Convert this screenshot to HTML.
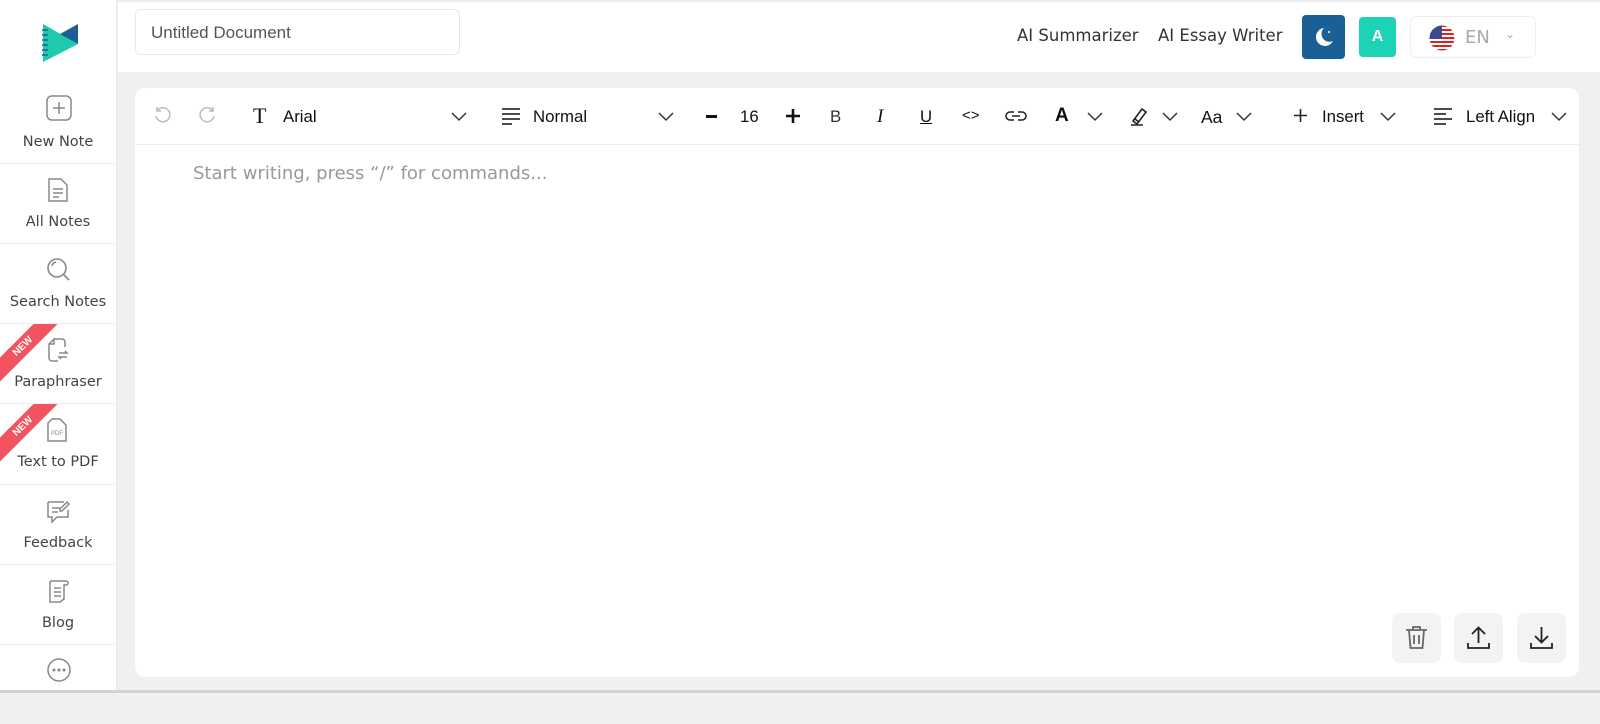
<!DOCTYPE html>
<html><head><meta charset="utf-8"><style>
*{box-sizing:border-box;margin:0;padding:0}
body{width:1600px;height:693px;overflow:hidden;background:#f0f0f0;font-family:"Liberation Sans",Arial,sans-serif;position:relative}
.side{position:absolute;left:0;top:0;width:117px;height:690px;background:#fff;border-right:1px solid #e8e8e8}
.item{position:absolute;left:0;width:116px;height:80px;border-top:1px solid #eee;text-align:center;color:#444;font-family:"DejaVu Sans",sans-serif;font-size:14.5px;overflow:hidden}
.item svg{position:absolute;left:46px;top:13px}
.item span{position:absolute;left:0;right:0;top:50px}
.rib{position:absolute;left:-22px;top:14px;width:90px;height:17px;background:#f2535f;color:#fff;font-size:10px;font-weight:bold;transform:rotate(-45deg);line-height:17px;text-align:center;font-family:"Liberation Sans",sans-serif}
.top{position:absolute;left:118px;top:0;width:1482px;height:72px;background:#fff;border-top:2px solid #eee}
.title{position:absolute;left:135px;top:9px;width:325px;height:46px;border:1px solid #e8e8e8;border-radius:6px;font-size:17px;color:#555;padding:13px 15px}
.tl{position:absolute;top:26px;color:#333;font-family:"DejaVu Sans",sans-serif;font-size:16.5px}
.card{position:absolute;left:135px;top:88px;width:1444px;height:589px;background:#fff;border-radius:10px}
.tb{position:absolute;left:0;top:0;width:100%;height:57px;border-bottom:1px solid #eee}
.t{position:absolute;top:19px;font-size:16.8px;color:#111}
.ch{position:absolute;top:24px}
.ph{position:absolute;left:58px;top:75px;font-family:"DejaVu Sans",sans-serif;font-size:18px;color:#999}
.bb{position:absolute;top:525px;width:49px;height:50px;background:#f2f3f4;border-radius:8px}
.bb svg{position:absolute;left:12px;top:12px}
</style></head><body>
<div class="side">
 <svg style="position:absolute;left:40px;top:22px" width="40" height="42" viewBox="0 0 40 42"><polygon points="3,2 38,22 3,40" fill="#1ec9ac"/><polygon points="38,2 38,22 20,12" fill="#1a5f96"/><g stroke="#1a5f96" stroke-width="1.5"><line x1="2" y1="8" x2="8" y2="8"/><line x1="2" y1="13" x2="8" y2="13"/><line x1="2" y1="18" x2="8" y2="18"/><line x1="2" y1="23" x2="8" y2="23"/><line x1="2" y1="28" x2="8" y2="28"/><line x1="2" y1="33" x2="8" y2="33"/></g></svg>
 <div class="item" style="top:82px;border-top:none"><svg width="26" height="26" viewBox="0 0 26 26" fill="none" stroke="#888" stroke-width="1.5"><rect x="1" y="1" width="24" height="24" rx="5"/><path d="M13 7v12M7 13h12"/></svg><span style="top:52px">New Note</span></div>
 <div class="item" style="top:163px"><svg width="24" height="26" viewBox="0 0 24 26" fill="none" stroke="#888" stroke-width="1.5"><path d="M3 2h12l6 6v16H3z"/><path d="M7 12h10M7 16h10M7 20h6"/></svg><span>All Notes</span></div>
 <div class="item" style="top:243px"><svg width="26" height="26" viewBox="0 0 26 26" fill="none" stroke="#888" stroke-width="1.6"><circle cx="11" cy="11" r="9"/><path d="M18 18l5 5M6 9a5 5 0 0 1 4-4"/></svg><span>Search Notes</span></div>
 <div class="item" style="top:323px"><div class="rib">NEW</div><svg width="24" height="26" viewBox="0 0 24 26" fill="none" stroke="#888" stroke-width="1.5"><path d="M8 2h8a3 3 0 0 1 3 3v5M12 24H6a3 3 0 0 1-3-3V7l5-5v5H3"/><path d="M13 16h8l-2-2M21 20h-8l2 2"/></svg><span>Paraphraser</span></div>
 <div class="item" style="top:403px"><div class="rib">NEW</div><svg width="22" height="26" viewBox="0 0 22 26" fill="none" stroke="#888" stroke-width="1.5"><path d="M6 2h8l6 6v16H2V6z"/><text x="5" y="18" font-size="6" fill="#888" stroke="none" font-family="Liberation Sans">PDF</text></svg><span>Text to PDF</span></div>
 <div class="item" style="top:484px"><svg width="26" height="26" viewBox="0 0 26 26" fill="none" stroke="#888" stroke-width="1.5"><path d="M2 4h16M2 4v15h4v5l5-5h11v-7"/><path d="M6 10h8M6 14h6M16 13l7-7-2-2-7 7v2z"/></svg><span>Feedback</span></div>
 <div class="item" style="top:564px"><svg width="24" height="26" viewBox="0 0 24 26" fill="none" stroke="#888" stroke-width="1.5"><path d="M5 3h15a2 2 0 0 1 0 4h-2v14l-4 3H4V6a3 3 0 0 1 1-3z"/><path d="M8 10h7M8 14h7M8 18h7"/></svg><span>Blog</span></div>
 <div class="item" style="top:644px"><svg width="26" height="26" viewBox="0 0 26 26" fill="none" stroke="#888" stroke-width="1.5" style="top:12px"><circle cx="13" cy="13" r="11"/><circle cx="8" cy="13" r=".8" fill="#888"/><circle cx="13" cy="13" r=".8" fill="#888"/><circle cx="18" cy="13" r=".8" fill="#888"/></svg></div>
</div>
<div class="top"></div>
<div style="position:absolute;left:0;top:690px;width:1600px;height:3px;background:#d0d4d8"></div>
<div class="title">Untitled Document</div>
<div class="tl" style="left:1017px">AI Summarizer</div>
<div class="tl" style="left:1158px">AI Essay Writer</div>
<div style="position:absolute;left:1302px;top:15px;width:43px;height:44px;background:#1a5f96;border-radius:4px"><svg width="43" height="44" viewBox="0 0 43 44"><path d="M22 13a9 9 0 1 0 9 13a8 8 0 0 1-9-13z" fill="#fff"/><circle cx="27" cy="17" r="1" fill="#fff"/></svg></div>
<div style="position:absolute;left:1359px;top:17px;width:37px;height:40px;background:#1dd3b5;border-radius:4px;color:#fff;font-weight:bold;font-size:16px;text-align:center;line-height:40px">A</div>
<div style="position:absolute;left:1410px;top:16px;width:126px;height:42px;border:1px solid #eee;border-radius:6px">
 <svg style="position:absolute;left:18px;top:8px" width="26" height="26" viewBox="0 0 26 26"><defs><clipPath id="c"><circle cx="13" cy="13" r="12.5"/></clipPath></defs><g clip-path="url(#c)"><rect width="26" height="26" fill="#fff"/><g fill="#d22"><rect y="0" width="26" height="2"/><rect y="4" width="26" height="2"/><rect y="8" width="26" height="2"/><rect y="12" width="26" height="2"/><rect y="16" width="26" height="2"/><rect y="20" width="26" height="2"/><rect y="24" width="26" height="2"/></g><rect width="13" height="14" fill="#3b4a8c"/></g></svg>
 <span style="position:absolute;left:54px;top:10px;font-size:18px;color:#aaa;font-family:'DejaVu Sans',sans-serif">EN</span>
 <span style="position:absolute;left:94px;top:10px;font-size:12px;color:#aaa">&#8964;</span>
</div>
<div class="card">
 <div class="tb">
  <svg style="position:absolute;left:17px;top:18px" width="20" height="20" viewBox="0 0 20 20" fill="none" stroke="#bbb" stroke-width="1.5"><path d="M5 5a7 7 0 1 1-1 5M5 1v4h4"/></svg>
  <svg style="position:absolute;left:63px;top:18px" width="20" height="20" viewBox="0 0 20 20" fill="none" stroke="#bbb" stroke-width="1.5"><path d="M15 5a7 7 0 1 0 1 5M15 1v4h-4"/></svg>
  <span class="t" style="left:118px;top:15px;font-family:'Liberation Serif',serif;font-size:22px">T</span>
  <span class="t" style="left:148px">Arial</span>
  <svg class="ch" style="left:316px" width="16" height="10" viewBox="0 0 16 10" fill="none" stroke="#333" stroke-width="1.5"><path d="M1 1l7 7 7-7"/></svg>
  <svg style="position:absolute;left:366px;top:19px" width="20" height="18" viewBox="0 0 20 18" stroke="#333" stroke-width="1.7"><path d="M1 2h18M1 7h18M1 12h18M1 17h10"/></svg>
  <span class="t" style="left:398px">Normal</span>
  <svg class="ch" style="left:523px" width="16" height="10" viewBox="0 0 16 10" fill="none" stroke="#333" stroke-width="1.5"><path d="M1 1l7 7 7-7"/></svg>
  <div style="position:absolute;left:571px;top:27px;width:11px;height:3px;background:#111"></div>
  <span class="t" style="left:605px">16</span>
  <svg style="position:absolute;left:650px;top:20px" width="16" height="16" viewBox="0 0 16 16" stroke="#111" stroke-width="2.6"><path d="M8 1v14M1 8h14"/></svg>
  <span class="t" style="left:695px;color:#333">B</span>
  <span class="t" style="left:742px;font-style:italic;font-family:'Liberation Serif',serif;font-size:19px;top:18px">I</span>
  <span class="t" style="left:785px;text-decoration:underline">U</span>
  <span class="t" style="left:827px;font-size:15px">&lt;&gt;</span>
  <svg style="position:absolute;left:870px;top:21px" width="22" height="14" viewBox="0 0 22 14" fill="none" stroke="#222" stroke-width="1.6"><path d="M9 3H5a4 4 0 0 0 0 8h4M13 3h4a4 4 0 0 1 0 8h-4M7 7h8"/></svg>
  <span class="t" style="left:920px;font-size:19px;top:17px;font-weight:bold">A</span>
  <svg class="ch" style="left:952px" width="16" height="10" viewBox="0 0 16 10" fill="none" stroke="#333" stroke-width="1.5"><path d="M1 1l7 7 7-7"/></svg>
  <svg style="position:absolute;left:994px;top:17px" width="22" height="22" viewBox="0 0 22 22" fill="none" stroke="#222" stroke-width="1.6"><path d="M4 16l9-12 4 3-9 12zM2 20h12M6 14l4 3"/></svg>
  <svg class="ch" style="left:1027px" width="16" height="10" viewBox="0 0 16 10" fill="none" stroke="#333" stroke-width="1.5"><path d="M1 1l7 7 7-7"/></svg>
  <span class="t" style="left:1066px;font-size:17.5px">Aa</span>
  <svg class="ch" style="left:1101px" width="16" height="10" viewBox="0 0 16 10" fill="none" stroke="#333" stroke-width="1.5"><path d="M1 1l7 7 7-7"/></svg>
  <svg style="position:absolute;left:1158px;top:20px" width="15" height="15" viewBox="0 0 15 15" stroke="#222" stroke-width="1.6"><path d="M7.5 1v13M1 7.5h13"/></svg>
  <span class="t" style="left:1187px">Insert</span>
  <svg class="ch" style="left:1245px" width="16" height="10" viewBox="0 0 16 10" fill="none" stroke="#333" stroke-width="1.5"><path d="M1 1l7 7 7-7"/></svg>
  <svg style="position:absolute;left:1298px;top:19px" width="20" height="18" viewBox="0 0 20 18" stroke="#333" stroke-width="1.7"><path d="M1 2h18M1 7h12M1 12h18M1 17h12"/></svg>
  <span class="t" style="left:1331px">Left Align</span>
  <svg class="ch" style="left:1416px" width="16" height="10" viewBox="0 0 16 10" fill="none" stroke="#333" stroke-width="1.5"><path d="M1 1l7 7 7-7"/></svg>
 </div>
 <div class="ph">Start writing, press “/” for commands...</div>
 <div class="bb" style="left:1257px"><svg width="25" height="26" viewBox="0 0 25 26" fill="none" stroke="#666" stroke-width="1.8"><path d="M2 5h21M9 5V2h7v3M5 5l1.5 18h12L20 5M10 10v9M15 10v9"/></svg></div>
 <div class="bb" style="left:1319px"><svg width="25" height="26" viewBox="0 0 25 26" fill="none" stroke="#222" stroke-width="1.8"><path d="M12.5 18V3M6 9l6.5-6.5L19 9M2 18v5h21v-5"/></svg></div>
 <div class="bb" style="left:1382px"><svg width="25" height="26" viewBox="0 0 25 26" fill="none" stroke="#222" stroke-width="1.8"><path d="M12.5 2v15M6 11l6.5 6.5L19 11M2 18v5h21v-5"/></svg></div>
</div>
</body></html>
